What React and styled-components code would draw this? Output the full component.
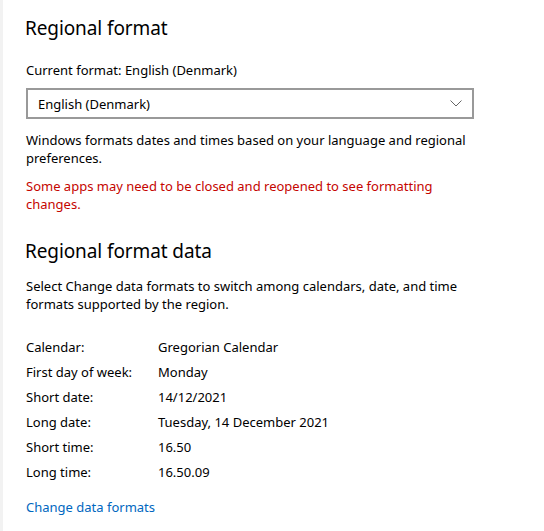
import React from 'react';
import styled, { createGlobalStyle } from 'styled-components';

const Global = createGlobalStyle`
  html, body {
    margin: 0;
    background: #fff;
  }
  body {
    font-family: "Segoe UI", "Noto Sans", "Open Sans", sans-serif;
    color: #000;
  }
`;

const Page = styled.div`
  display: flex;
  width: 544px;
  height: 531px;
  overflow: hidden;
`;
const Edge = styled.div`
  width: 3px;
  background: #f2f2f2;
  flex: none;
`;
const Content = styled.main`
  padding: 15px 0 0 23px;
  flex: 1;
`;
const Heading = styled.h2`
  margin: ${(p) => p.$mt || 0}px 0 0 -1px;
  font-size: 19px;
  font-weight: 400;
  line-height: 27px;
  letter-spacing: -0.1px;
`;
const Text = styled.p`
  margin: ${(p) => p.$mt || 0}px 0 0;
  width: 448px;
  font-size: 13px;
  line-height: 18px;
  color: ${(p) => (p.$warn ? '#c50500' : '#000')};
`;
const Combo = styled.div`
  box-sizing: border-box;
  margin-top: 9px;
  width: 448px;
  height: 31px;
  border: 2px solid #999;
  display: flex;
  align-items: center;
  justify-content: space-between;
  padding: 0 10px 0 10px;
  font-size: 13px;
`;
const Rows = styled.div`
  margin-top: 21px;
  display: grid;
  grid-template-columns: 132px 1fr;
  grid-auto-rows: 25px;
  align-items: center;
  font-size: 13px;
`;
const Link = styled.a`
  display: block;
  margin-top: 14px;
  font-size: 13px;
  line-height: 18px;
  color: #0067c0;
  text-decoration: none;
`;

const rows = [
  ['Calendar:', 'Gregorian Calendar'],
  ['First day of week:', 'Monday'],
  ['Short date:', '14/12/2021'],
  ['Long date:', 'Tuesday, 14 December 2021'],
  ['Short time:', '16.50'],
  ['Long time:', '16.50.09'],
];

const Chevron = () => (
  <svg width="12" height="7" viewBox="0 0 12 7" fill="none">
    <path d="M0.5 0.5 L6 6 L11.5 0.5" stroke="#666" strokeWidth="1" />
  </svg>
);

export default function App() {
  return (
    <Page>
      <Global />
      <Edge />
      <Content>
        <Heading>Regional format</Heading>
        <Text $mt={19}>Current format: English (Denmark)</Text>
        <Combo>
          <span>English (Denmark)</span>
          <Chevron />
        </Combo>
        <Text $mt={12}>
          Windows formats dates and times based on your language and regional preferences.
        </Text>
        <Text $mt={10} $warn>
          Some apps may need to be closed and reopened to see formatting changes.
        </Text>
        <Heading $mt={25}>Regional format data</Heading>
        <Text $mt={12}>
          Select Change data formats to switch among calendars, date, and time formats supported by the region.
        </Text>
        <Rows>
          {rows.map(([k, v]) => (
            <React.Fragment key={k}>
              <span>{k}</span>
              <span>{v}</span>
            </React.Fragment>
          ))}
        </Rows>
        <Link href="#">Change data formats</Link>
      </Content>
    </Page>
  );
}
